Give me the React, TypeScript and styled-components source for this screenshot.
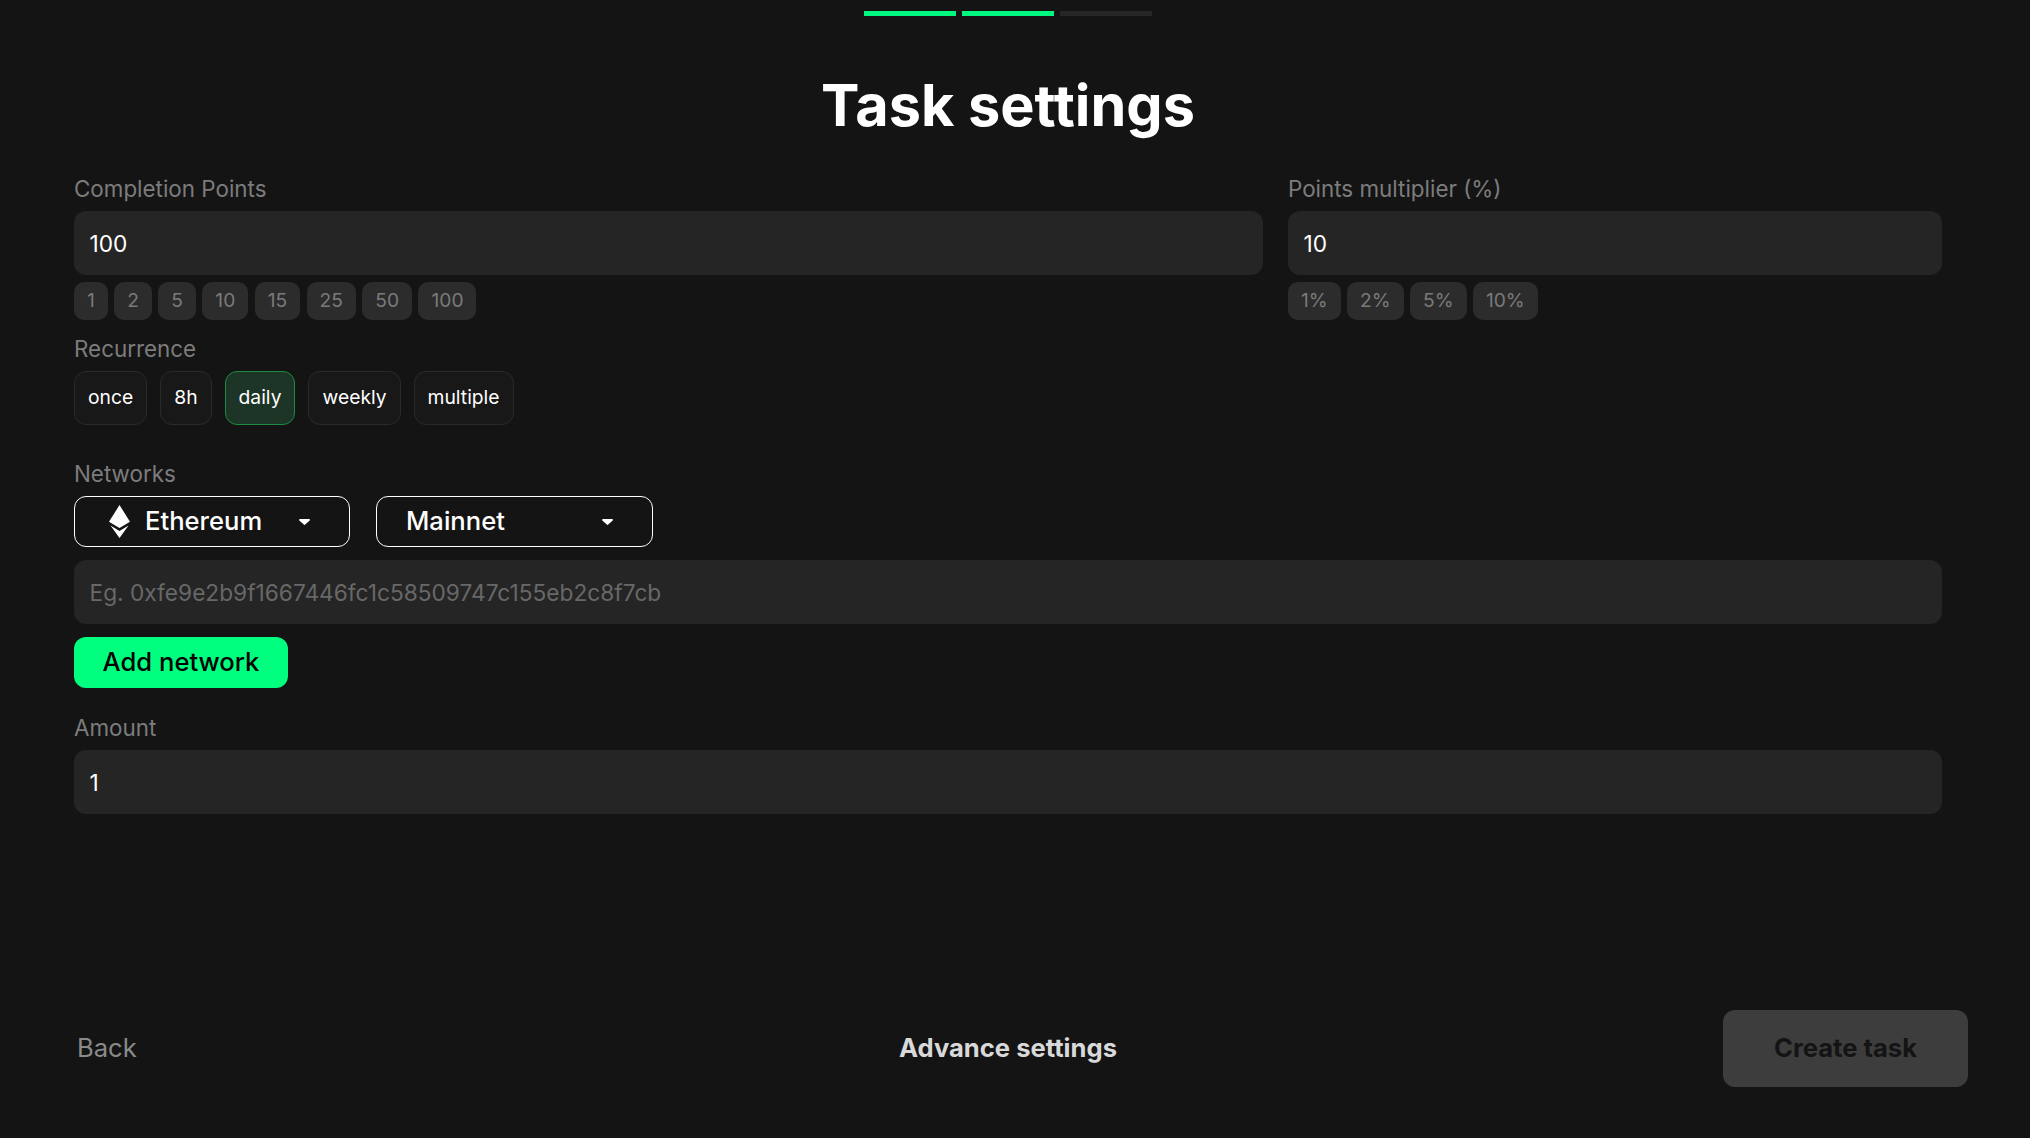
import React from "react";
import styled, { createGlobalStyle } from "styled-components";

const GlobalStyle = createGlobalStyle`
  html, body { margin: 0; padding: 0; background: #141414; }
  body { font-family: Inter, "Liberation Sans", sans-serif; }
  * { box-sizing: border-box; }
`;

const Page = styled.div`
  width: 2016px;
  height: 1138px;
  display: flex;
  flex-direction: column;
  background: #141414;
`;

const Progress = styled.div`
  display: flex;
  justify-content: center;
  gap: 6px;
  padding-top: 11px;
`;

const Step = styled.div<{ $done?: boolean }>`
  width: 92px;
  height: 5px;
  background: ${(p) => (p.$done ? "#00f880" : "#262626")};
`;

const Title = styled.h1`
  margin: 0;
  padding-top: 53px;
  height: 159px;
  text-align: center;
  font-size: 57.6px;
  line-height: 73px;
  font-weight: 700;
  color: #fff;
`;

const Form = styled.div`
  padding: 0 74px;
  display: flex;
  flex-direction: column;
`;

const TwoCols = styled.div`
  display: grid;
  grid-template-columns: 1189px 654px;
  column-gap: 25px;
`;

const Label = styled.div<{ $top?: number }>`
  height: 28px;
  margin-top: ${(p) => p.$top ?? 0}px;
  margin-bottom: 8px;
  font-size: 22.4px;
  line-height: 28px;
  color: #7c7c7c;
`;

const Input = styled.input`
  display: block;
  width: 100%;
  height: 64px;
  padding: 0 15.5px;
  border: 0;
  outline: 0;
  border-radius: 12px;
  background: #252525;
  color: #fff;
  font-family: inherit;
  font-size: 22.7px;
  &::placeholder { color: #686868; opacity: 1; }
`;

const Chips = styled.div`
  display: flex;
  gap: 6.4px;
  margin-top: 7px;
`;

const Chip = styled.div`
  height: 38px;
  padding: 0 13px 2px;
  display: flex;
  align-items: center;
  border-radius: 10px;
  background: #2c2c2c;
  color: #7a7a7a;
  font-size: 19.2px;
`;

const RecurrenceRow = styled.div`
  display: flex;
  gap: 13px;
`;

const Recurrence = styled.div<{ $active?: boolean }>`
  height: 54px;
  padding: 0 13px 2px;
  display: flex;
  align-items: center;
  border-radius: 12px;
  border: 1px solid ${(p) => (p.$active ? "#1c8a45" : "#2a2a2a")};
  background: ${(p) => (p.$active ? "#1d3526" : "#181818")};
  color: #fff;
  font-size: 19.3px;
`;

const SelectRow = styled.div`
  display: flex;
  gap: 26px;
  margin-bottom: 13px;
`;

const Select = styled.div<{ $width: number }>`
  width: ${(p) => p.$width}px;
  height: 51px;
  display: flex;
  align-items: center;
  border: 1.5px solid #fff;
  border-radius: 12px;
  color: #fff;
  font-size: 25.6px;
  font-weight: 500;
`;

const EthIcon = styled.svg`
  width: 21px;
  height: 33px;
  margin-left: 34px;
  margin-right: 15px;
`;

const SelectText = styled.span<{ $inset?: boolean }>`
  flex: 1;
  padding-left: ${(p) => (p.$inset ? "29px" : "0")};
  padding-bottom: 2px;
`;

const Caret = styled.svg`
  width: 11px;
  height: 6px;
  margin-right: 39px;
`;

const AddButton = styled.button`
  align-self: flex-start;
  width: 214px;
  height: 51px;
  margin-top: 13px;
  padding: 0 0 2px;
  border: 0;
  border-radius: 12px;
  background: #00ff7f;
  color: #000;
  font-family: inherit;
  font-size: 25.6px;
  font-weight: 500;
`;

const Footer = styled.div`
  margin-top: auto;
  padding: 0 48px 51px;
  display: grid;
  grid-template-columns: 1fr auto 1fr;
  align-items: center;
`;

const BackLink = styled.div`
  padding: 0 0 2px 29px;
  font-size: 25.6px;
  color: #8a8a8a;
`;

const AdvanceLink = styled.div`
  padding-bottom: 2px;
  font-size: 25.6px;
  font-weight: 700;
  color: #d9d9d9;
`;

const CreateButton = styled.button`
  justify-self: end;
  width: 245px;
  height: 77px;
  padding: 0 0 2px;
  border: 0;
  border-radius: 12px;
  background: #3d3d3d;
  color: #141414;
  font-family: inherit;
  font-size: 25.6px;
  font-weight: 700;
`;

const points = ["1", "2", "5", "10", "15", "25", "50", "100"];
const multipliers = ["1%", "2%", "5%", "10%"];
const recurrences = ["once", "8h", "daily", "weekly", "multiple"];

const CaretIcon = () => (
  <Caret viewBox="0 0 11 6">
    <path d="M1 0h9c.8 0 1.2.9.7 1.5L6.2 5.6c-.4.4-1 .4-1.4 0L.3 1.5C-.2.9.2 0 1 0z" fill="#fff" />
  </Caret>
);

export default function App() {
  return (
    <Page>
      <GlobalStyle />
      <Progress>
        <Step $done />
        <Step $done />
        <Step />
      </Progress>
      <Title>Task settings</Title>
      <Form>
        <TwoCols>
          <div>
            <Label>Completion Points</Label>
            <Input defaultValue="100" />
            <Chips>
              {points.map((v) => (
                <Chip key={v}>{v}</Chip>
              ))}
            </Chips>
          </div>
          <div>
            <Label>Points multiplier (%)</Label>
            <Input defaultValue="10" />
            <Chips>
              {multipliers.map((v) => (
                <Chip key={v}>{v}</Chip>
              ))}
            </Chips>
          </div>
        </TwoCols>
        <Label $top={15}>Recurrence</Label>
        <RecurrenceRow>
          {recurrences.map((v) => (
            <Recurrence key={v} $active={v === "daily"}>
              {v}
            </Recurrence>
          ))}
        </RecurrenceRow>
        <Label $top={35}>Networks</Label>
        <SelectRow>
          <Select $width={276}>
            <EthIcon viewBox="0 0 21 33">
              <path d="M10.5 0L21 16.7 10.5 23 0 16.7z" fill="#fff" />
              <path d="M10.5 33L1.5 20.5l9 5.5 9-5.5z" fill="#fff" />
            </EthIcon>
            <SelectText>Ethereum</SelectText>
            <CaretIcon />
          </Select>
          <Select $width={277}>
            <SelectText $inset>Mainnet</SelectText>
            <CaretIcon />
          </Select>
        </SelectRow>
        <Input placeholder="Eg. 0xfe9e2b9f1667446fc1c58509747c155eb2c8f7cb" />
        <AddButton>Add network</AddButton>
        <Label $top={26}>Amount</Label>
        <Input defaultValue="1" />
      </Form>
      <Footer>
        <BackLink>Back</BackLink>
        <AdvanceLink>Advance settings</AdvanceLink>
        <CreateButton>Create task</CreateButton>
      </Footer>
    </Page>
  );
}
